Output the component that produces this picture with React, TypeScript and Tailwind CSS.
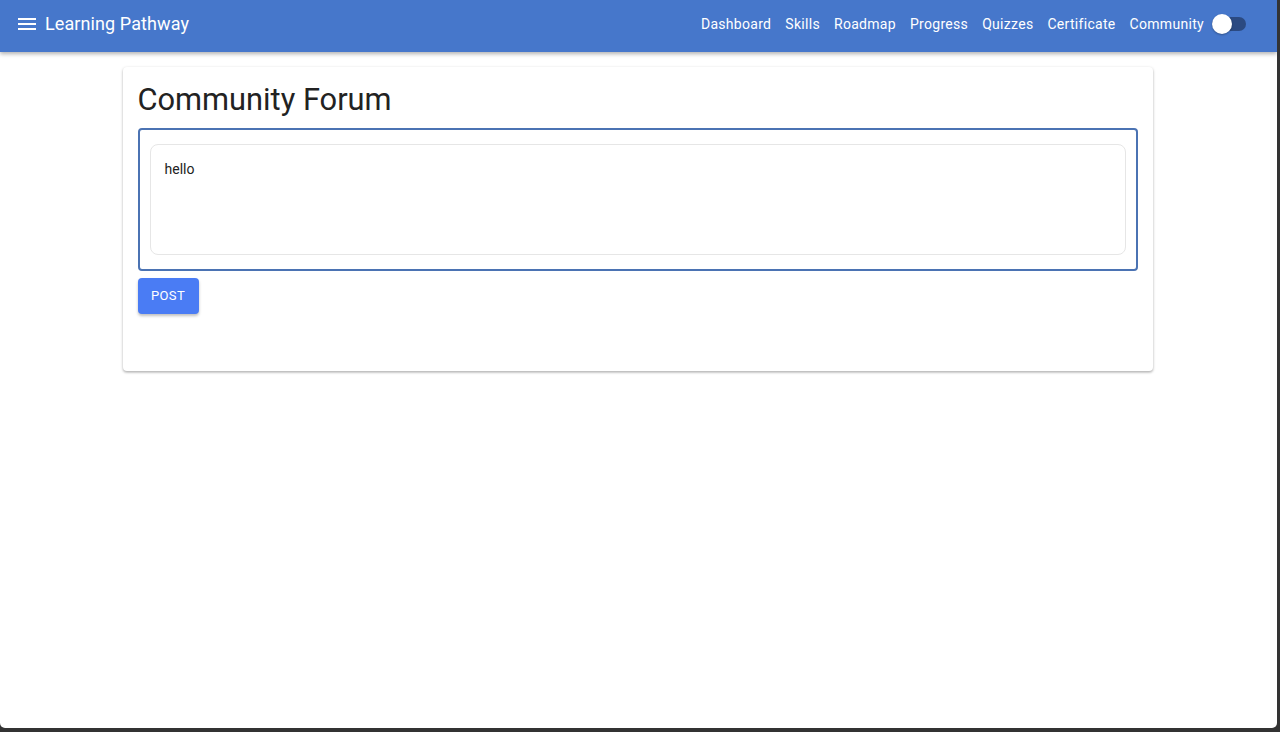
import React, { useState } from 'react';

const navItems = ['Dashboard', 'Skills', 'Roadmap', 'Progress', 'Quizzes', 'Certificate', 'Community'];

const MenuIcon = () => (
  <svg width="24" height="24" viewBox="0 0 24 24" fill="currentColor">
    <path d="M3 18h18v-2H3v2zm0-5h18v-2H3v2zm0-7v2h18V6H3z" />
  </svg>
);

const App: React.FC = () => {
  const [text, setText] = useState('hello');

  return (
    <div className="h-[732px] w-[1280px] bg-[#333333] font-['Roboto',_'Liberation_Sans',_sans-serif] overflow-hidden">
      <div className="h-[728px] w-[1277px] bg-white rounded-b-[5px] overflow-hidden">
        <header className="h-[52px] bg-[#4677cb] text-white flex items-center pl-[15px] pr-[31px] pb-[4px] shadow-[0_2px_4px_rgba(0,0,0,0.3)] relative z-10">
          <span className="mr-[6px]"><MenuIcon /></span>
          <h1 className="text-[18px] leading-none tracking-[0.1px]">Learning Pathway</h1>
          <nav className="ml-auto flex items-center gap-[14px] text-[14px] tracking-[0.3px]">
            {navItems.map(item => (
              <a key={item} className="cursor-pointer">{item}</a>
            ))}
          </nav>
          <div className="ml-[8px] relative w-[34px] h-[14px] rounded-full bg-[#2b4a82]">
            <span className="absolute left-[0px] top-[-3px] w-[20px] h-[20px] rounded-full bg-white shadow-[0_1px_2px_rgba(0,0,0,0.3)]" />
          </div>
        </header>

        <main className="pt-[15px] pr-[2px] flex justify-center">
          <section className="w-[1030px] h-[304px] bg-white rounded-[4px] shadow-[0_1px_3px_rgba(0,0,0,0.25),0_2px_2px_rgba(0,0,0,0.1)] px-[15px] pt-[15px]">
            <h2 className="text-[30.8px] leading-[36px] text-[#222222] mb-[10px]">Community Forum</h2>
            <div className="border-2 border-[#4b73b3] rounded-[4px] px-[10px] py-[14px]">
              <textarea
                autoFocus
                value={text}
                onChange={e => setText(e.target.value)}
                onFocus={e => e.currentTarget.setSelectionRange(text.length, text.length)}
                className="block w-full h-[111px] resize-none border border-[#e6e6e6] rounded-[8px] px-[14px] py-[14px] text-[14px] text-[#222222] outline-none caret-[#222222]"
              />
            </div>
            <button className="mt-[7px] h-[36px] w-[61px] bg-[#4a7cf4] text-white text-[13px] tracking-[0.4px] rounded-[4px] shadow-[0_2px_3px_rgba(0,0,0,0.25)]">
              POST
            </button>
          </section>
        </main>
      </div>
    </div>
  );
};

export default App;
